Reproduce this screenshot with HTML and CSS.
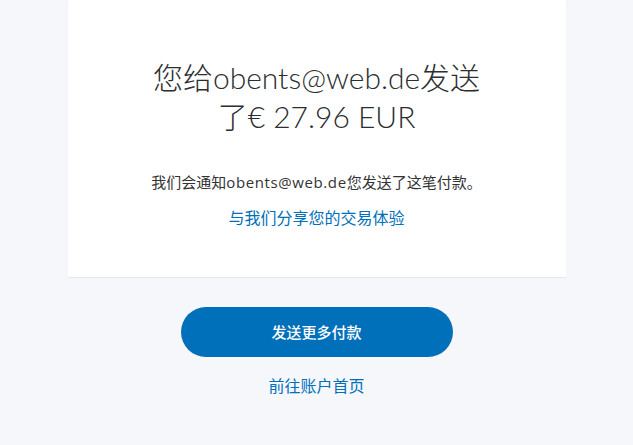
FILE: index.html
```html
<!DOCTYPE html>
<html>
<head>
<title></title>
<meta charset="UTF-8">
<meta name="viewport" content="width=device-width, initial-scale=1.0">

<link rel="stylesheet" href="styles.css">

</head>
<body>

<!-- *********************************************************
PAYMENT SENT
********************************************************** -->

<div class="page">
	<div class="card">
		<h1 class="sent-title">您给obents@web.de发送<br>了€ 27.96 EUR</h1>
		<p class="notice">我们会通知<span class="email">obents@web.de</span>您发送了这笔付款。</p>
		<a class="link share" href="#">与我们分享您的交易体验</a>
	</div>

	<div class="actions">
		<a class="btn-primary" href="#">发送更多付款</a>
		<a class="link home" href="#">前往账户首页</a>
	</div>
</div>

</body>
</html>
```

FILE: styles.css
```css
body{
	margin: 0px;
	font-size: 14px;
	font-family: Lato, "Noto Sans CJK SC", sans-serif;
	color: #2c2e2f;
	background: #f5f7fa;
}

a{
	text-decoration: none;
}

/*********************************************************
CARD
**********************************************************/

.card{
	width: 498px;
	margin: 0 auto;
	background: #fff;
	box-shadow: 0px 1px 1px rgba(0, 0, 0, 0.06);
	text-align: center;
	padding: 58px 0 49px;
	box-sizing: border-box;
}

.sent-title{
	margin: 0;
	font-size: 30px;
	font-weight: 300;
	line-height: 39px;
	color: #2c2e2f;
}

.notice{
	margin: 36px 0 0;
	font-family: "Open Sans", "Noto Sans CJK SC", sans-serif;
	font-size: 15px;
	line-height: 20px;
	color: #333;
}

.notice .email{
	letter-spacing: 0.6px;
}

.link{
	color: #0070ba;
	font-size: 16px;
	display: inline-block;
}

.share{
	margin-top: 16px;
	line-height: 20px;
}

/*********************************************************
ACTIONS
**********************************************************/

.actions{
	display: flex;
	flex-direction: column;
	align-items: center;
	padding-top: 30px;
}

.btn-primary{
	width: 272px;
	height: 50px;
	line-height: 50px;
	border-radius: 25px;
	background: #0070ba;
	color: #fff;
	font-size: 15px;
	font-weight: 500;
	text-align: center;
}

.home{
	margin-top: 19px;
	line-height: 20px;
}
```
